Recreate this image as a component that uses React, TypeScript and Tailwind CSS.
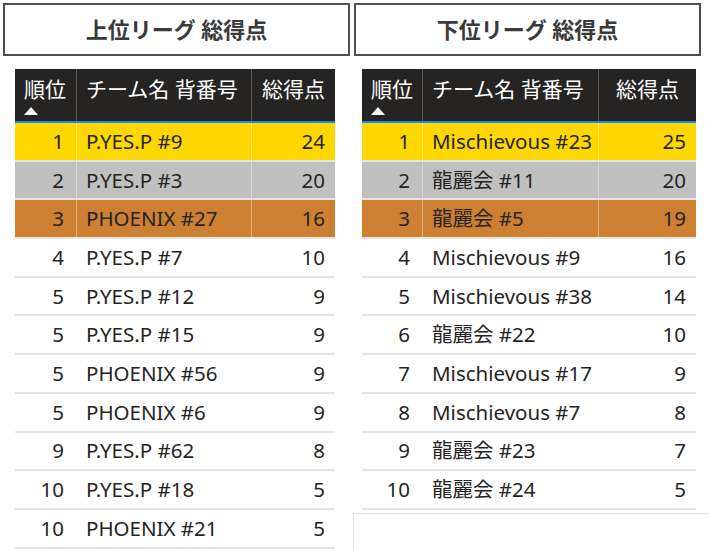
import React from "react";

type Row = { rank: number; name: string; score: number };

const upper: Row[] = [
  { rank: 1, name: "P.YES.P #9", score: 24 },
  { rank: 2, name: "P.YES.P #3", score: 20 },
  { rank: 3, name: "PHOENIX #27", score: 16 },
  { rank: 4, name: "P.YES.P #7", score: 10 },
  { rank: 5, name: "P.YES.P #12", score: 9 },
  { rank: 5, name: "P.YES.P #15", score: 9 },
  { rank: 5, name: "PHOENIX #56", score: 9 },
  { rank: 5, name: "PHOENIX #6", score: 9 },
  { rank: 9, name: "P.YES.P #62", score: 8 },
  { rank: 10, name: "P.YES.P #18", score: 5 },
  { rank: 10, name: "PHOENIX #21", score: 5 },
];

const lower: Row[] = [
  { rank: 1, name: "Mischievous #23", score: 25 },
  { rank: 2, name: "龍麗会 #11", score: 20 },
  { rank: 3, name: "龍麗会 #5", score: 19 },
  { rank: 4, name: "Mischievous #9", score: 16 },
  { rank: 5, name: "Mischievous #38", score: 14 },
  { rank: 6, name: "龍麗会 #22", score: 10 },
  { rank: 7, name: "Mischievous #17", score: 9 },
  { rank: 8, name: "Mischievous #7", score: 8 },
  { rank: 9, name: "龍麗会 #23", score: 7 },
  { rank: 10, name: "龍麗会 #24", score: 5 },
];

const font = { fontFamily: '"Noto Sans", "Noto Sans CJK JP", sans-serif' };

function rowBg(rank: number) {
  if (rank === 1) return "bg-[#ffd700]";
  if (rank === 2) return "bg-[#c0c0c0]";
  if (rank === 3) return "bg-[#cd7f32]";
  return "bg-white";
}

function Title({ text }: { text: string }) {
  return (
    <div className="flex h-[53px] shrink-0 items-center justify-center border-2 border-[#4f4f4f] bg-white text-[22px] font-bold text-[#3a3a3a]">
      {text}
    </div>
  );
}

function RankTable({ rows, cols }: { rows: Row[]; cols: string }) {
  return (
    <div className="text-[20.5px]">
      <div className={`grid ${cols} h-[54px] border-b-2 border-[#118dff] bg-[#252423] text-[21px] text-white`}>
        <div className="flex flex-col border-r border-[#5c5c5c] pl-[9px] pt-[7px] leading-[26px]">
          <span>順位</span>
          <svg width="14" height="8" viewBox="0 0 14 8" className="mt-[5px]">
            <polygon points="7,0 14,8 0,8" fill="white" />
          </svg>
        </div>
        <div className="border-r border-[#5c5c5c] pl-[9px] pt-[7px] leading-[26px] whitespace-nowrap">チーム名 背番号</div>
        <div className="pt-[7px] text-center leading-[26px]">総得点</div>
      </div>
      {rows.map((r, i) => (
        <div
          key={i}
          className={`grid ${cols} h-[38.7px] border-b-2 border-[#e4e4e4] ${rowBg(r.rank)} text-[#252423]`}
        >
          <div className="flex items-center justify-end border-r border-white/40 pr-[12px]">{r.rank}</div>
          <div className="flex items-center border-r border-white/40 pl-[9px] whitespace-nowrap">{r.name}</div>
          <div className="flex items-center justify-end pr-[10px]">{r.score}</div>
        </div>
      ))}
    </div>
  );
}

export default function App() {
  return (
    <div className="flex h-[550px] w-[709px] items-start overflow-hidden bg-white pt-[3px]" style={font}>
      <div className="ml-[3px] w-[347px]">
        <Title text="上位リーグ 総得点" />
        <div className="ml-[12px] mt-[13px] w-[320px]">
          <RankTable rows={upper} cols="grid-cols-[62px_175px_83px]" />
        </div>
      </div>
      <div className="ml-[4px] w-[347px]">
        <Title text="下位リーグ 総得点" />
        <div className="ml-[8px] mt-[13px] w-[334px]">
          <RankTable rows={lower} cols="grid-cols-[61px_176px_97px]" />
        </div>
        <div className="-ml-[1px] mt-[3px] h-[60px] w-[360px] border border-[#e0e0e0]" />
      </div>
    </div>
  );
}
